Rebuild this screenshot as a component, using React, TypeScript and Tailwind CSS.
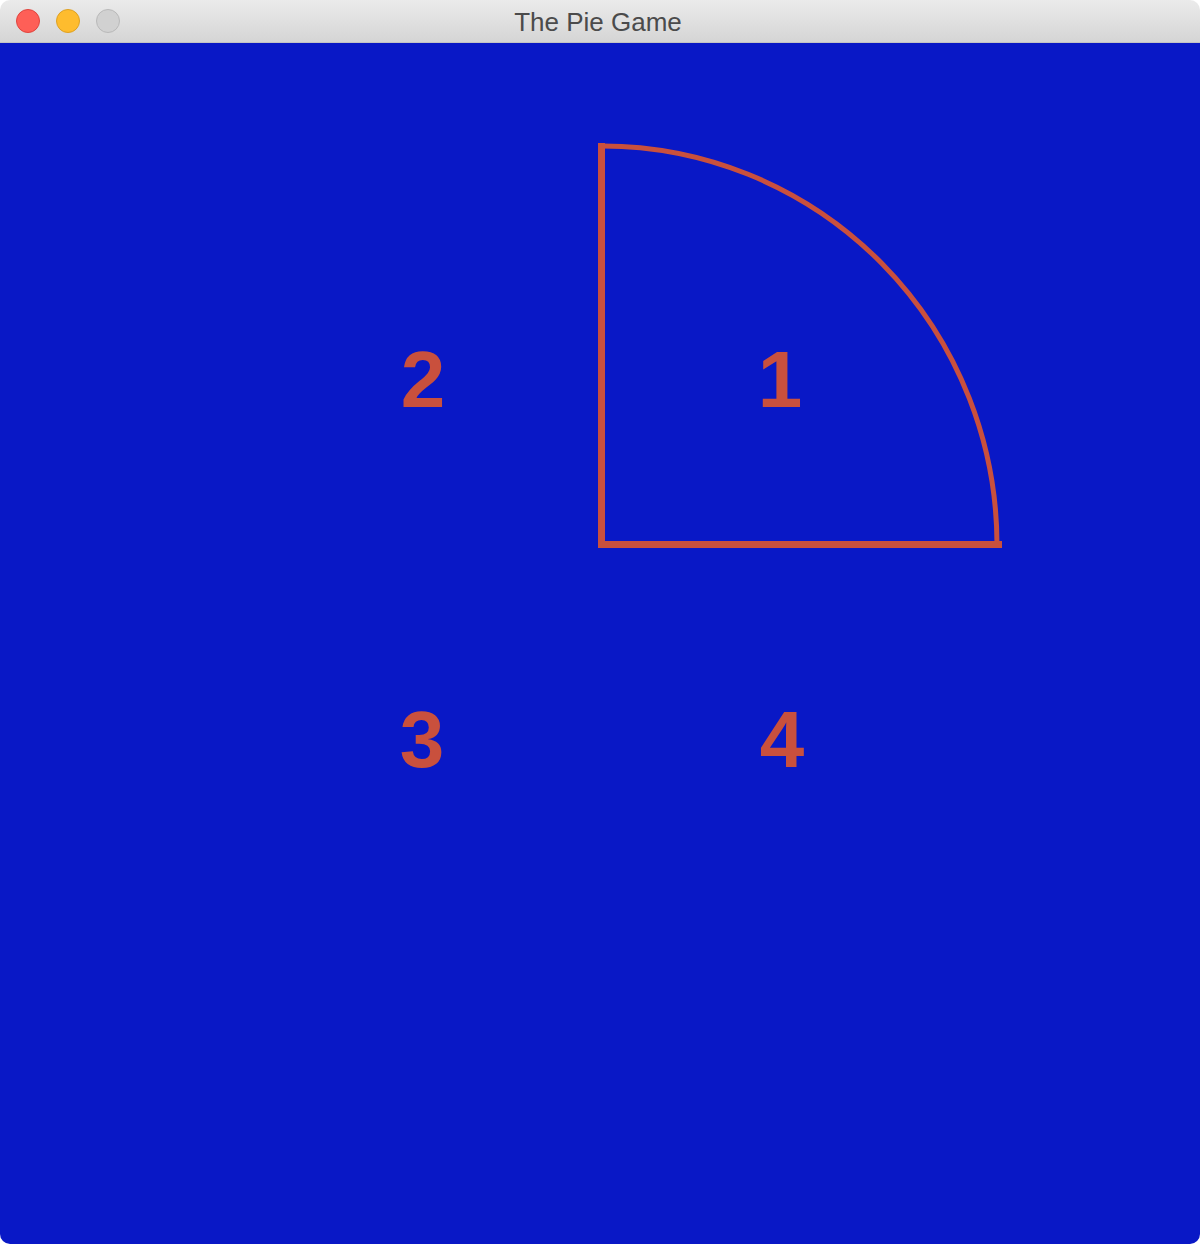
const slices = [
  { label: "1", x: 780, y: 337 },
  { label: "2", x: 423, y: 337 },
  { label: "3", x: 422, y: 697 },
  { label: "4", x: 782, y: 697 },
];

function TitleBar() {
  return (
    <div className="relative h-[43px] flex items-center bg-gradient-to-b from-[#ebebeb] to-[#d5d5d5] border-b border-[#c4c4c4] rounded-t-[10px]">
      <div className="flex items-center gap-4 pl-4">
        <span className="w-6 h-6 rounded-full bg-[#fe5f57] border border-[#e0443e]" />
        <span className="w-6 h-6 rounded-full bg-[#febc2e] border border-[#dea123]" />
        <span className="w-6 h-6 rounded-full bg-[#d1d1d1] border border-[#b9b9b9]" />
      </div>
      <div className="absolute inset-0 flex items-center justify-center pt-[3px] pointer-events-none">
        <span className="text-[26px] text-[#4b4b4b] font-['Liberation_Sans',sans-serif] pr-[4px]">
          The Pie Game
        </span>
      </div>
    </div>
  );
}

function PieCanvas() {
  return (
    <div className="relative h-[1201px] bg-[#0918c6] rounded-b-[10px] overflow-hidden">
      <svg className="absolute inset-0" width="1200" height="1201" viewBox="0 0 1200 1201">
        <path
          d="M 603 103 A 395 399 0 0 1 997 502"
          fill="none"
          stroke="#c9503d"
          strokeWidth="5"
        />
        <rect x="598" y="100" width="7" height="405" fill="#c9503d" />
        <rect x="598" y="498" width="404" height="7" fill="#c9503d" />
      </svg>
      {slices.map((s) => (
        <div
          key={s.label}
          className="absolute -translate-x-1/2 -translate-y-1/2 text-[80px] leading-none font-bold text-[#c9503d] font-['Liberation_Sans',sans-serif]"
          style={{ left: s.x, top: s.y }}
        >
          {s.label}
        </div>
      ))}
    </div>
  );
}

export default function App() {
  return (
    <div className="w-[1200px] h-[1244px] bg-white">
      <div className="flex flex-col rounded-[10px]">
        <TitleBar />
        <PieCanvas />
      </div>
    </div>
  );
}
